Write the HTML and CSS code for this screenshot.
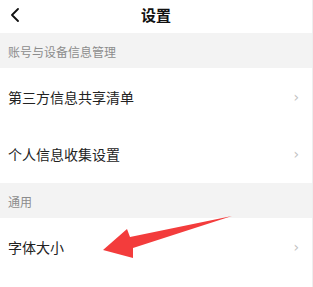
FILE: index.html
```
<!DOCTYPE html>
<html lang="zh-CN">
<head>
    <meta charset="UTF-8">
    <title>设置</title>
    <link rel="stylesheet" href="styles.css">
</head>
<body>
    <div class="page">
        <div class="header">
            <span class="back">
                <svg width="10" height="14" viewBox="0 0 10 14"><path d="M8 1 L2 7 L8 13" fill="none" stroke="#111" stroke-width="1.8" stroke-linecap="round" stroke-linejoin="round"/></svg>
            </span>
            <h1>设置</h1>
        </div>

        <div class="group-title">账号与设备信息管理</div>
        <div class="row">
            <span>第三方信息共享清单</span>
            <span class="arrow-right">›</span>
        </div>
        <div class="row">
            <span>个人信息收集设置</span>
            <span class="arrow-right">›</span>
        </div>

        <div class="group-title">通用</div>
        <div class="row">
            <span>字体大小</span>
            <span class="arrow-right">›</span>
        </div>

        <svg class="pointer" width="313" height="287" viewBox="0 0 313 287">
            <polygon points="103,250 127,229 130,237 232,216 133,248 133,258" fill="#f33c3c"/>
        </svg>
    </div>
</body>
</html>
```

FILE: styles.css
```
* {
    margin: 0;
    padding: 0;
    box-sizing: border-box;
}

body {
    font-family: "Noto Sans CJK SC", "Noto Sans", sans-serif;
    background-color: #fff;
    color: #222;
}

.page {
    position: relative;
    width: 313px;
    height: 287px;
    overflow: hidden;
    border-right: 1px solid #eeeeee;
}

.header {
    height: 33px;
    display: flex;
    align-items: center;
    justify-content: center;
    position: relative;
    padding-bottom: 5px;
}

.header h1 {
    font-size: 15px;
    font-weight: bold;
    color: #111;
}

.back {
    position: absolute;
    left: 10px;
    top: 8px;
    display: flex;
}

.group-title {
    height: 35px;
    background-color: #f3f3f3;
    color: #8c8c8c;
    font-size: 12px;
    display: flex;
    align-items: center;
    padding-left: 8px;
    padding-top: 2px;
}

.row {
    height: 57.5px;
    display: flex;
    align-items: center;
    justify-content: space-between;
    padding: 0 13px 0 8px;
    font-size: 14px;
    color: #222;
}

.arrow-right {
    color: #c2c2c2;
    font-size: 14px;
    font-family: "DejaVu Sans", sans-serif;
}

.pointer {
    position: absolute;
    left: 0;
    top: 0;
}
```
